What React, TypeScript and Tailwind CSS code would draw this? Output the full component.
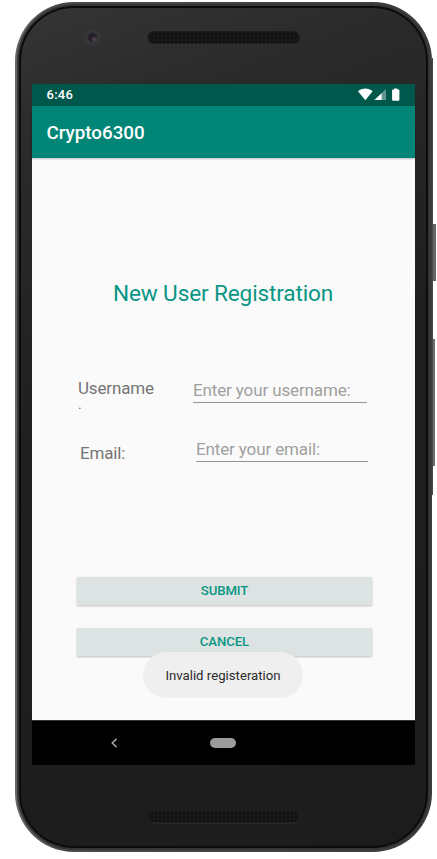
import React from "react";

function Speaker({ id }: { id: string }) {
  return (
    <svg className="block h-[14px] w-[154px]" viewBox="0 0 154 14">
      <defs>
        <pattern id={id} x="3" y="1.6" width="4" height="3.8" patternUnits="userSpaceOnUse">
          <rect x="1" y="1" width="1.6" height="1.6" fill="#060606" />
        </pattern>
      </defs>
      <rect x="0.8" y="0.8" width="152.8" height="12.6" rx="6.3" fill="#303031" />
      <rect x="0.5" y="0.3" width="152.5" height="12.4" rx="6.2" fill="#191919" />
      <rect x="3" y="1.6" width="148.5" height="11.4" rx="5" fill={`url(#${id})`} />
    </svg>
  );
}

function StatusBar() {
  return (
    <div className="flex h-[22px] items-center justify-between bg-[#00574b] pl-[14.5px] pr-[14px] text-white">
      <span className="text-[13px] font-medium leading-[22px] tracking-[0.25px]">6:46</span>
      <svg className="block h-[22px] w-[44px]" viewBox="0 0 44 22">
        <path d="M1 7.2C5.2 3.7 11.4 3.7 15.6 7.2L8.3 16.2Z" fill="#fff" />
        <path d="M29 5V16H17.4Z" fill="#fff" opacity="0.38" />
        <path d="M24.6 9.2V16H17.4Z" fill="#fff" />
        <path d="M37 4.4h3.4v1h1.2q.8 0 .8.8v9.6q0 .9-.8.9h-5.7q-.8 0-.8-.9V6.2q0-.8.8-.8H37Z" fill="#fff" />
      </svg>
    </div>
  );
}

function Screen() {
  return (
    <div className="flex h-[681px] w-[383px] flex-col bg-[#fafafa]">
      <StatusBar />
      <header className="flex h-[52px] items-center bg-[#008577] pl-[14.5px] pt-[1px] shadow-[0_1px_2px_rgba(0,0,0,0.25)]">
        <h1 className="text-[18.8px] font-medium leading-[24px] text-white">Crypto6300</h1>
      </header>
      <main className="flex h-[562px] flex-col">
        <h2 className="mt-[122px] pl-[81px] text-[22.6px] leading-[28px] tracking-[-0.14px] text-[#0a9685]">
          New User Registration
        </h2>
        <div className="mt-[66px] flex h-[40px] pl-[46px] text-[17px]">
          <label className="w-[115px] tracking-[-0.15px] text-[#757575]">
            <span className="mt-[4px] block leading-[20px]">Username</span>
            <span className="-mt-[2px] block text-[14px] leading-[16px]">.</span>
          </label>
          <div className="h-[29px] w-[174px] border-b border-[#959595] pt-[2px] leading-[28px] tracking-[-0.13px] text-[#a0a0a0]">
            Enter your username:
          </div>
        </div>
        <div className="mt-[20px] flex h-[40px] pl-[48px] text-[17px]">
          <label className="w-[116px] pt-[5px] leading-[28px] tracking-[-0.15px] text-[#757575]">Email:</label>
          <div className="h-[28px] w-[172px] border-b border-[#959595] pt-[1px] leading-[28px] tracking-[-0.13px] text-[#a0a0a0]">
            Enter your email:
          </div>
        </div>
        <div className="mt-[103px] flex flex-col gap-[23px] pl-[45px]">
          {["SUBMIT", "CANCEL"].map((label) => (
            <button
              key={label}
              className="h-[28px] w-[295px] bg-[#dce3e2] text-[13.2px] font-medium leading-[28px] tracking-[-0.1px] text-[#0a9685] shadow-[0_1px_2px_rgba(0,0,0,0.24)]"
            >
              {label}
            </button>
          ))}
        </div>
        <div className="relative -mt-[4px] ml-[111px] h-[46px] w-[160px] rounded-[23px] bg-[#efefef] text-center text-[13.2px] leading-[47px] text-[#2b2b2b]">
          Invalid registeration
        </div>
      </main>
      <nav className="flex h-[45px] items-center border-t border-[#303635] bg-black pb-[1px] pl-[78px]">
        <svg className="block h-[10px] w-[8px]" viewBox="0 0 8 10">
          <path d="M6.5 0.9L2.3 5L6.5 9.1" fill="none" stroke="#a8a8a8" strokeWidth="1.5" />
        </svg>
        <div className="ml-[92px] h-[10px] w-[26px] rounded-full bg-[#9b9b9b]" />
      </nav>
    </div>
  );
}

export default function App() {
  return (
    <div
      className="flex h-[859px] w-[437px] overflow-hidden bg-white pl-[15px] pt-[2px]"
      style={{ fontFamily: 'Roboto, "Liberation Sans", sans-serif' }}
    >
      <div className="h-[850px] w-[417px] shrink-0 rounded-[59px] bg-linear-to-r from-[#66686a] via-[#4a4a4b] via-10% to-[#3c3c3c] p-[2px]">
        <div className="h-full w-full rounded-[57px] bg-[#353536] p-[2px]">
          <div className="h-full w-full rounded-[55px] bg-[#0b0b0b] p-[2px]">
            <div className="flex h-full w-full flex-col rounded-[53px] bg-[linear-gradient(160deg,#353537_0%,#2a2a2b_15%,#1f1f1f_45%,#1c1c1c_100%)] pl-[11px]">
              <div className="flex h-[76px] pl-[52px] pt-[21px]">
                <div className="flex h-[17px] w-[17px] items-center justify-center rounded-full bg-[#363537]">
                  <div className="h-[9px] w-[9px] rounded-full bg-[radial-gradient(circle_at_70%_70%,#665060_0%,#25222b_35%,#1d1c22_100%)]" />
                </div>
                <div className="ml-[46px] mt-[2px]">
                  <Speaker id="earpiece-holes" />
                </div>
              </div>
              <Screen />
              <div className="pl-[115px] pt-[45px]">
                <Speaker id="speaker-holes" />
              </div>
            </div>
          </div>
        </div>
      </div>
      <div className="mt-[56px] h-[437px] w-[1px] shrink-0 bg-[#4a4a4a]" />
      <div className="flex flex-col">
        <div className="mt-[222px] h-[57px] w-[3px] bg-[#696766]" />
        <div className="mt-[58px] h-[127px] w-[2px] bg-[#6f6f6f]" />
      </div>
    </div>
  );
}
